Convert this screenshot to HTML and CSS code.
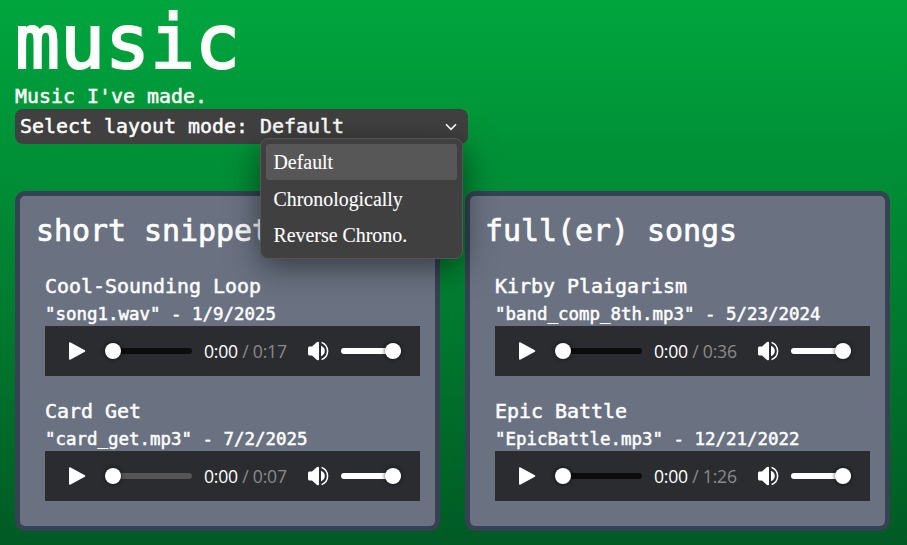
FILE: index.html
```
<!DOCTYPE html>
<html lang="en">
<head>
<meta charset="utf-8">
<title>music</title>
<link rel="stylesheet" href="styles.css">
</head>
<body>
<svg class="defs" aria-hidden="true">
  <symbol id="play" viewBox="0 0 18 18"><path d="M1 1.6Q1-.2 2.6.6L16.4 7.9Q18.2 9 16.4 10.1L2.6 17.4Q1 18.2 1 16.4Z" fill="#fff"/></symbol>
  <symbol id="volume" viewBox="0 0 22 20"><path d="M1 7.2Q1 5.7 2.2 5.6H5L10 1.1Q12 .2 12 1.8V18.2Q12 19.8 10 18.9L5 14.4H2.2Q1 14.3 1 12.8Z" fill="#fff"/><path d="M14 4.8Q17.8 6.4 17.8 10T14 15.2Z" fill="#fff"/><path d="M14.6 1.4C22.6 4.8 22.6 15.2 14.6 18.6" fill="none" stroke="#fff" stroke-width="1.5"/></symbol>
</svg>
<header>
  <h1>music</h1>
  <p class="intro">Music I've made.</p>
  <div class="mode">
    <span class="label">Select layout mode:</span>
    <div class="select">
      <span>Default</span>
      <svg class="chevron" viewBox="0 0 12 8"><path d="M1 1.2 6 6.3 11 1.2" fill="none" stroke="#fff" stroke-width="1.6"/></svg>
      <ul class="menu">
        <li class="active">Default</li>
        <li>Chronologically</li>
        <li>Reverse Chrono.</li>
      </ul>
    </div>
  </div>
</header>
<main>
  <section class="card">
    <h2>short snippets</h2>
    <article>
      <h3>Cool-Sounding Loop</h3>
      <p class="file">"song1.wav" - 1/9/2025</p>
      <div class="player"><svg class="play"><use href="#play"/></svg><div class="seek"><i></i></div><div class="time">0:00<span> / 0:17</span></div><svg class="volume"><use href="#volume"/></svg><div class="level"><i></i></div></div>
    </article>
    <article>
      <h3>Card Get</h3>
      <p class="file">"card_get.mp3" - 7/2/2025</p>
      <div class="player"><svg class="play"><use href="#play"/></svg><div class="seek pending"><i></i></div><div class="time">0:00<span> / 0:07</span></div><svg class="volume"><use href="#volume"/></svg><div class="level"><i></i></div></div>
    </article>
  </section>
  <section class="card">
    <h2>full(er) songs</h2>
    <article>
      <h3>Kirby Plaigarism</h3>
      <p class="file">"band_comp_8th.mp3" - 5/23/2024</p>
      <div class="player"><svg class="play"><use href="#play"/></svg><div class="seek"><i></i></div><div class="time">0:00<span> / 0:36</span></div><svg class="volume"><use href="#volume"/></svg><div class="level"><i></i></div></div>
    </article>
    <article>
      <h3>Epic Battle</h3>
      <p class="file">"EpicBattle.mp3" - 12/21/2022</p>
      <div class="player"><svg class="play"><use href="#play"/></svg><div class="seek"><i></i></div><div class="time">0:00<span> / 1:26</span></div><svg class="volume"><use href="#volume"/></svg><div class="level"><i></i></div></div>
    </article>
  </section>
</main>
</body>
</html>
```
FILE: styles.css
```
* { box-sizing: border-box; margin: 0; padding: 0; }
html { height: 100%; overflow: hidden; }
body {
  height: 545px;
  padding: 0 15px;
  background: linear-gradient(#00a63e, #005a24);
  color: #fff;
  font: 19.93px/28px "DejaVu Sans Mono", monospace;
  -webkit-text-stroke: 0.5px #fff;
}
.defs { display: none; }
svg { display: block; flex: none; }
h1 { height: 82px; font-size: 74.75px; line-height: 85px; font-weight: 400; -webkit-text-stroke: 2px #fff; }
.intro { height: 27px; line-height: 29px; }
.mode {
  display: flex;
  width: 453px;
  height: 35px;
  padding: 0 5px;
  border-radius: 8px;
  background: #404040;
  line-height: 35px;
}
.label { width: 240px; }
.select { position: relative; display: flex; flex: 1; align-items: center; justify-content: space-between; }
.chevron { width: 12px; height: 8px; margin-right: 6px; }
.menu {
  position: absolute;
  z-index: 2;
  top: 29px;
  left: 0.4px;
  width: 202.6px;
  height: 121px;
  padding: 5px 5px 5px 4.6px;
  list-style: none;
  border: 1px solid #555;
  border-radius: 8px;
  background: #404040;
  box-shadow: 0 8px 32px rgba(0, 0, 0, .5);
  font: 19.9px/37px "Liberation Serif", serif;
}
.menu { -webkit-text-stroke: 0.1px #fff; }
.menu li { height: 36.5px; padding-left: 7.5px; border-radius: 3px; }
.menu .active { height: 36px; margin-bottom: .5px; background: #575757; }
main { display: flex; gap: 25px; margin-top: 47px; }
.card {
  width: 425px;
  height: 340px;
  padding: 15px;
  border: 5px solid #364153;
  border-radius: 10px;
  background: #6a7282;
}
h2 { height: 40px; padding-left: 1px; font-size: 29.9px; line-height: 40px; font-weight: 400; -webkit-text-stroke: 0.7px #fff; }
.card + .card h2 { padding-left: 0; }
article { height: 105px; margin: 20px 10px 0; }
h3 { font-size: 19.93px; line-height: 32px; height: 29px; font-weight: 400; }
.file { font-size: 17.44px; line-height: 28px; height: 26px; }
.player {
  display: flex;
  align-items: center;
  width: 375px;
  height: 50px;
  padding-left: 22.5px;
  background: #2b2c2f;
}
.play { width: 18px; height: 18px; }
.seek, .level { position: relative; height: 6px; border-radius: 3px; }
.seek { width: 86px; margin-left: 20.5px; background: #0c0c0c; }
.seek.pending { background: #555; }
.seek i, .level i {
  position: absolute;
  top: -5px;
  width: 16px;
  height: 16px;
  border-radius: 50%;
  background: #fff;
  box-shadow: 0 0 4px rgba(0, 0, 0, .7);
}
.seek i { left: -1px; }
.level { width: 60px; margin-left: 12px; background: #fff; }
.level i { right: 0; }
.time {
  width: 114px;
  padding-left: 12px;
  font: 17.6px/24px "Open Sans", sans-serif;
  letter-spacing: -.22px;
  white-space: pre;
  -webkit-text-stroke: 0;
}
.time span { color: #8a8a8a; }
.volume { width: 22px; height: 20px; margin-left: 1px; }
```
